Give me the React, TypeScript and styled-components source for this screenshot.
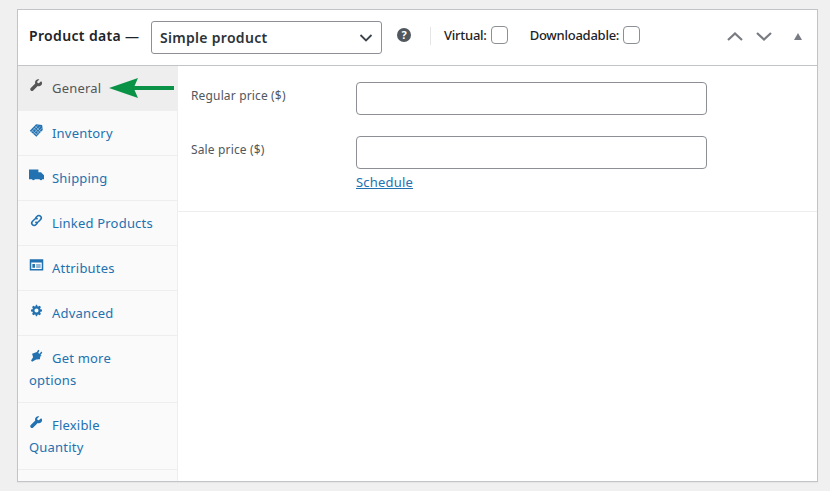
import * as React from 'react'
import styled, { createGlobalStyle } from 'styled-components'

const Wrench = () => (
  <svg viewBox="-1 -1 22 22">
    <path
      fill="currentColor"
      d="M16.7 3.6l-3.2 3.1-2-.5-.5-2 3.1-3.1c-1.7-.6-3.6-.2-4.9 1.1-1.4 1.4-1.7 3.3-1 5L1.6 13.800c-1 1-1 2.600 0 3.600s2.600 1 3.600 0l6.600-6.600c1.700.7 3.700.4 5-1 1.300-1.300 1.700-3.300 1-5z"
    />
  </svg>
)

const Tag = () => (
  <svg viewBox="0 0 20 20">
    <path fill="currentColor" d="M9.500 1.500l8 1 .8 6.700-8.500 9-8.800-7.800z" />
    <path
      stroke="#fff"
      strokeWidth="1"
      opacity="0.55"
      d="M6 6.500l8 8M8.500 4.500l7.500 7.500M3.500 9.500l7.500 6.500M12 3l-9 9M15 4.500l-9 10M17 7l-8 9"
    />
  </svg>
)

const Truck = () => (
  <svg viewBox="0 0 20 20">
    <path
      fill="currentColor"
      d="M0 2h12.500v3.500H16l4 4V15h-2.200a2 2 0 0 1-3.800 0H7.800a2 2 0 0 1-3.800 0H0z"
    />
  </svg>
)

const Link = () => (
  <svg viewBox="-1 -1 22 22" fill="none" stroke="currentColor" strokeWidth="2.300">
    <path d="M8.500 6.500l2.500-2.700a3.300 3.300 0 0 1 4.900 0 3.400 3.400 0 0 1 .1 4.800l-3.200 3.300a3.300 3.300 0 0 1-4.500.1" />
    <path d="M11.500 13.500L9 16.200a3.300 3.300 0 0 1-4.900 0 3.400 3.400 0 0 1-.1-4.800l3.200-3.300a3.300 3.300 0 0 1 4.500-.1" />
  </svg>
)

const Window = () => (
  <svg viewBox="0 0 20 20">
    <path
      fill="currentColor"
      fillRule="evenodd"
      d="M1 1.500h18v15H1zM3 6v8.500h14V6zM4.500 8h3.500v5H4.500zM9.500 8.500h6v1.500h-6zM9.500 11.300h6v1.500h-6z"
    />
  </svg>
)

const Gear = () => (
  <svg viewBox="-1 -1 22 22">
    <path
      fill="currentColor"
      fillRule="evenodd"
      d="M18 11.400V8.600l-2.200-.5-.5-1.200 1.200-1.900-2-2-1.900 1.200-1.200-.5L10.900 1.500H9.100l-.5 2.200-1.200.5-1.900-1.200-2 2 1.200 1.900-.5 1.200L2 8.600v2.800l2.200.5.5 1.200-1.200 1.900 2 2 1.900-1.200 1.200.5.5 2.200h1.800l.5-2.200 1.200-.5 1.900 1.200 2-2-1.200-1.900.5-1.200zM10 13a3 3 0 1 1 0-6 3 3 0 0 1 0 6z"
    />
  </svg>
)

const Plug = () => (
  <svg viewBox="-1 -1 22 22">
    <path
      fill="currentColor"
      d="M10.500 5l2-3.500 1.800 1.200-1.800 3.500 2 1.300 2.500-3.200 1.500 1.500-2.800 3.300 1.800 1.200-2 1-.5 4.200-5.500.5L3.500 19 2 17.500l3-5-1.500-5z"
    />
  </svg>
)

const tabs = [
  { label: 'General', icon: <Wrench /> },
  { label: 'Inventory', icon: <Tag /> },
  { label: 'Shipping', icon: <Truck /> },
  { label: 'Linked Products', icon: <Link /> },
  { label: 'Attributes', icon: <Window /> },
  { label: 'Advanced', icon: <Gear /> },
  { label: 'Get more options', icon: <Plug /> },
  { label: 'Flexible Quantity', icon: <Wrench /> },
]

const App: React.FC = () => {
  return (
    <Page>
      <GlobalStyle />
      <Box>
        <Header>
          <Title>Product data —</Title>
          <SelectBox>
            Simple product
            <svg viewBox="0 0 14 8" width="14" height="8" fill="none" stroke="#3c434a" strokeWidth="1.800">
              <path d="M1.500 1l5.500 5.500L12.500 1" />
            </svg>
          </SelectBox>
          <Help>?</Help>
          <Divider />
          <CheckLabel>
            Virtual: <Check />
          </CheckLabel>
          <CheckLabel $wide>
            Downloadable: <Check />
          </CheckLabel>
          <Handles>
            <svg viewBox="0 0 16 9" width="16" height="9" fill="none" stroke="#787c82" strokeWidth="2.200">
              <path d="M1 8l7-6.500L15 8" />
            </svg>
            <svg viewBox="0 0 16 9" width="16" height="9" fill="none" stroke="#787c82" strokeWidth="2.200">
              <path d="M1 1l7 6.500L15 1" />
            </svg>
            <Toggle />
          </Handles>
        </Header>
        <Body>
          <Tabs>
            {tabs.map((tab, i) => (
              <TabItem key={i} $active={i === 0}>
                <TabIcon>{tab.icon}</TabIcon>
                {tab.label}
                {i === 0 && (
                  <Arrow viewBox="0 0 66 20" width="66" height="20">
                    <path fill="#0a9347" d="M0 10L29 0l-3.500 8H65v4H25.500L29 20z" />
                  </Arrow>
                )}
              </TabItem>
            ))}
          </Tabs>
          <Panel>
            <Fields>
              <Field>
                <FieldLabel>Regular price ($)</FieldLabel>
                <Input type="text" />
              </Field>
              <Field>
                <FieldLabel>Sale price ($)</FieldLabel>
                <div>
                  <Input type="text" />
                  <Schedule href="#">Schedule</Schedule>
                </div>
              </Field>
            </Fields>
          </Panel>
        </Body>
      </Box>
    </Page>
  )
}

const GlobalStyle = createGlobalStyle`
  body {
    margin: 0;
    background: #f0f0f1;
    font-family: 'Noto Sans', 'Open Sans', sans-serif;
    font-size: 13px;
    color: #3c434a;
  }
`
const Page = styled.div`
  height: 491px;
  padding: 9px 12px 0 17px;
  box-sizing: border-box;
  overflow: hidden;
`
const Box = styled.div`
  height: 473px;
  background: #fff;
  border: 1px solid #c3c4c7;
  display: flex;
  flex-direction: column;
  box-sizing: border-box;
  box-shadow: 0 1px 1px rgba(0, 0, 0, 0.04);
`
const Header = styled.div`
  height: 56px;
  flex: none;
  display: flex;
  align-items: flex-start;
  padding: 11px 0 0 11px;
  border-bottom: 1px solid #c3c4c7;
  box-sizing: border-box;
`
const Title = styled.h2`
  width: 109px;
  flex: none;
  margin: -1px 13px 0 0;
  font-size: 14px;
  font-weight: 600;
  line-height: 32px;
  letter-spacing: 0.35px;
  white-space: nowrap;
  color: #1d2327;
`
const SelectBox = styled.div`
  width: 231px;
  height: 33px;
  display: flex;
  align-items: center;
  justify-content: space-between;
  padding: 0 8px;
  border: 1px solid #8c8f94;
  border-radius: 3px;
  box-sizing: border-box;
  font-size: 14px;
  font-weight: 600;
  letter-spacing: 0.3px;
  color: #2c3338;
`
const Help = styled.span`
  width: 14px;
  height: 14px;
  margin: 7px 0 0 15px;
  border-radius: 50%;
  background: #50575e;
  color: #fff;
  font-size: 11px;
  font-weight: 700;
  line-height: 14px;
  text-align: center;
`
const Divider = styled.span`
  width: 1px;
  height: 18px;
  margin: 6px 13px 0 19px;
  background: #e5e5e5;
`
const CheckLabel = styled.label<{ $wide?: boolean }>`
  display: flex;
  align-items: center;
  gap: 4px;
  height: 18px;
  margin: 5px 0 0 ${props => (props.$wide ? '22px' : '0')};
  font-size: 13px;
  font-weight: 500;
  letter-spacing: -0.25px;
  color: #1d2327;
`
const Check = styled.span`
  width: 17px;
  height: 18px;
  border: 1px solid #8c8f94;
  border-radius: 4px;
  box-sizing: border-box;
`
const Handles = styled.div`
  display: flex;
  align-items: center;
  gap: 13px;
  margin: 11px 0 0 auto;
  padding-right: 15px;
`
const Toggle = styled.span`
  width: 0;
  height: 0;
  margin-left: 9px;
  border-left: 4.500px solid transparent;
  border-right: 4.500px solid transparent;
  border-bottom: 7px solid #787c82;
`
const Body = styled.div`
  flex: 1;
  display: flex;
  min-height: 0;
`
const Tabs = styled.ul`
  width: 160px;
  flex: none;
  margin: 0;
  padding: 0;
  list-style: none;
  background: #fafafa;
  border-right: 1px solid #eee;
  box-sizing: border-box;
`
const TabItem = styled.li<{ $active?: boolean }>`
  position: relative;
  padding: 11px 23px 11px 11px;
  line-height: 22px;
  font-size: 13px;
  letter-spacing: 0.2px;
  border-bottom: 1px solid #eee;
  color: ${props => (props.$active ? '#555' : '#2271b1')};
  background: ${props => (props.$active ? '#eee' : 'transparent')};
  box-sizing: border-box;
  &:first-child {
    border-bottom: 0;
    height: 45px;
  }
`
const TabIcon = styled.span`
  svg {
    width: 15px;
    height: 15px;
    vertical-align: -1px;
    margin: 0 8px 0 0;
    position: relative;
    top: -1px;
  }
`
const Arrow = styled.svg`
  position: absolute;
  left: 91px;
  top: 12px;
`
const Panel = styled.div`
  flex: 1;
`
const Fields = styled.div`
  padding: 16px 13px 20px 13px;
  border-bottom: 1px solid #eee;
  display: flex;
  flex-direction: column;
  gap: 21px;
`
const Field = styled.div`
  display: flex;
  align-items: flex-start;
`
const FieldLabel = styled.label`
  width: 165px;
  flex: none;
  font-size: 12px;
  line-height: 28px;
  letter-spacing: 0.15px;
  color: #50575e;
`
const Input = styled.input`
  display: block;
  width: 351px;
  height: 33px;
  padding: 0 8px;
  border: 1px solid #8c8f94;
  border-radius: 4px;
  box-sizing: border-box;
  background: #fff;
`
const Schedule = styled.a`
  display: block;
  margin-top: 4px;
  font-size: 13px;
  line-height: 18px;
  letter-spacing: 0.2px;
  color: #2271b1;
`

export default App
